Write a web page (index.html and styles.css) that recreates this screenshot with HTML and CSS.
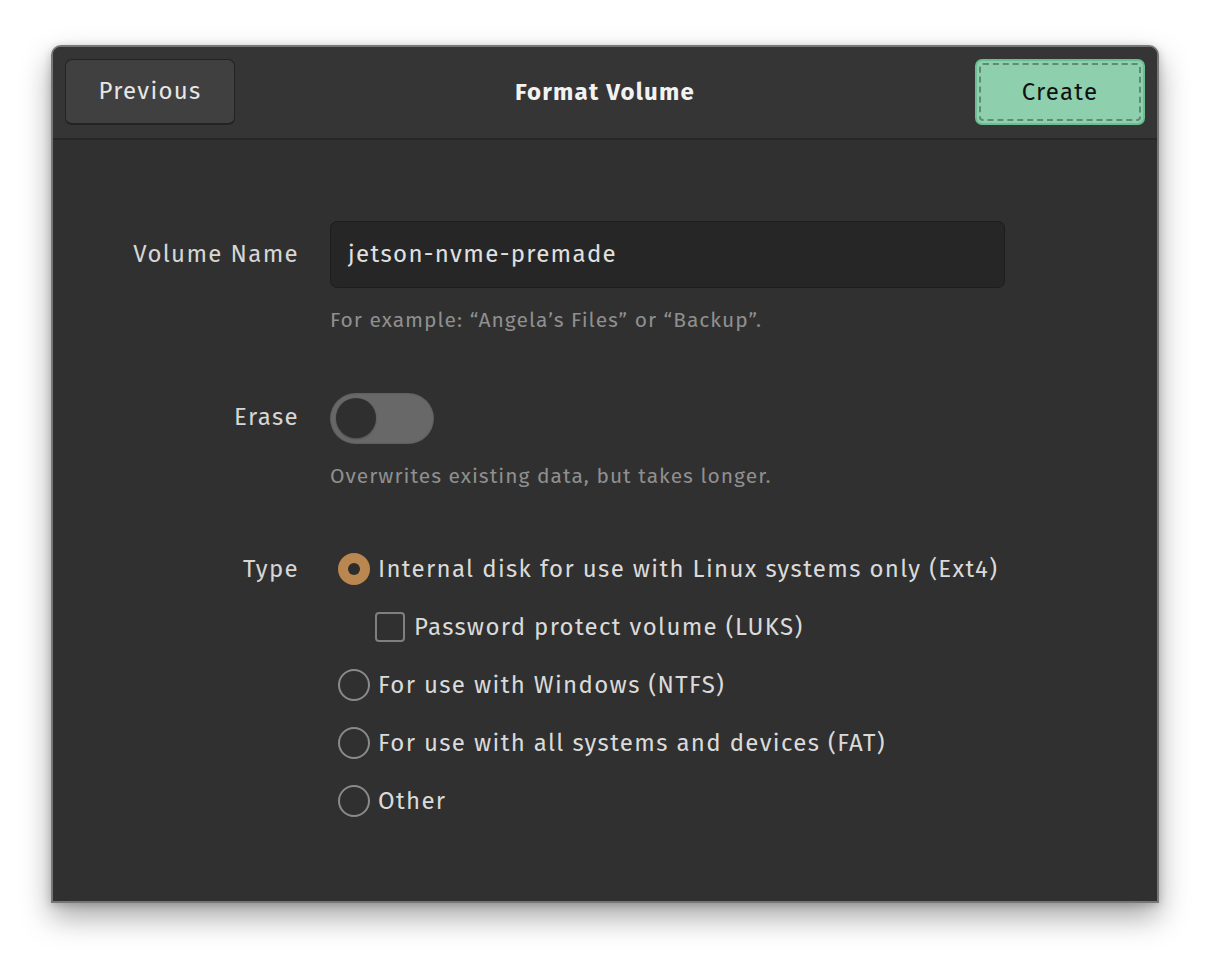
FILE: index.html
```html
<!DOCTYPE html>
<html>
<head>
<meta charset="utf-8">
<link rel="stylesheet" href="styles.css">
</head>
<body>
<div class="window">
  <header class="header">
    <button class="btn btn-prev">Previous</button>
    <div class="title">Format Volume</div>
    <button class="btn btn-create"><span class="focus">Create</span></button>
  </header>
  <main class="content">
    <div class="form">
      <div class="label row-input">Volume Name</div>
      <div class="ctl row-input"><div class="input">jetson-nvme-premade</div></div>
      <div></div>
      <div class="hint">For example: “Angela’s Files” or “Backup”.</div>

      <div class="label row-switch">Erase</div>
      <div class="ctl row-switch"><div class="switch"><div class="knob"></div></div></div>
      <div></div>
      <div class="hint">Overwrites existing data, but takes longer.</div>

      <div class="label row-opt first">Type</div>
      <div class="ctl row-opt first"><span class="radio on"></span><span class="opt">Internal disk for use with Linux systems only (Ext4)</span></div>
      <div></div>
      <div class="ctl row-opt sub"><span class="check"></span><span class="opt">Password protect volume (LUKS)</span></div>
      <div></div>
      <div class="ctl row-opt"><span class="radio"></span><span class="opt">For use with Windows (NTFS)</span></div>
      <div></div>
      <div class="ctl row-opt"><span class="radio"></span><span class="opt">For use with all systems and devices (FAT)</span></div>
      <div></div>
      <div class="ctl row-opt"><span class="radio"></span><span class="opt">Other</span></div>
    </div>
  </main>
</div>
</body>
</html>
```

FILE: styles.css
```css
* { box-sizing: border-box; }
html, body { margin: 0; padding: 0; background: #ffffff; }
body {
  font-family: "Fira Sans", "Noto Sans", "Open Sans", sans-serif;
  width: 1210px;
  height: 960px;
  overflow: hidden;
}
.window {
  margin: 45px 0 0 51px;
  width: 1108px;
  height: 858px;
  background: #303030;
  border: 2px solid #767676;
  border-radius: 10px 10px 0 0;
  box-shadow: 0 14px 30px rgba(0,0,0,0.35), 0 2px 8px rgba(0,0,0,0.2);
  display: flex;
  flex-direction: column;
  overflow: hidden;
}
.header {
  height: 93px;
  background: #353535;
  border-bottom: 2px solid #272727;
  display: flex;
  align-items: center;
  justify-content: space-between;
  padding: 0 12px 2px;
  flex: none;
}
.btn {
  width: 170px;
  height: 66px;
  border-radius: 7px;
  font-family: inherit;
  font-size: 24px;
  letter-spacing: 1.3px;
  cursor: pointer;
  padding: 0;
}
.btn-prev {
  background: #404040;
  color: #e6e6e6;
  border: 1px solid #232323;
  border-bottom-width: 2px;
}
.btn-create {
  background: #8ecfae;
  color: #111;
  border: 2px solid #6cbd92;
  padding: 2px;
}
.btn-create .focus {
  display: flex;
  align-items: center;
  justify-content: center;
  width: 100%;
  height: 100%;
  border: 2px dashed #5f8a74;
  border-radius: 4px;
}
.title {
  font-size: 24px;
  font-weight: 700;
  letter-spacing: 1.2px;
  color: #f2f2f2;
}
.content {
  flex: 1;
  padding-top: 81px;
}
.form {
  display: grid;
  grid-template-columns: 245px 675px;
  column-gap: 32px;
  font-size: 24px;
  letter-spacing: 1.35px;
  color: #dadada;
}
.label {
  text-align: right;
  display: flex;
  align-items: center;
  justify-content: flex-end;
  color: #d6d6d6;
  margin-right: -1px;
}
.ctl { display: flex; align-items: center; }
.row-input { height: 67px; }
.row-input.label { padding-bottom: 2px; }
.input {
  width: 675px;
  height: 67px;
  background: #262626;
  border: 1px solid #1d1d1d;
  border-radius: 7px;
  display: flex;
  align-items: center;
  padding-left: 17px;
  padding-bottom: 2px;
  color: #e0e0e0;
}
.hint {
  font-size: 21px;
  letter-spacing: 1px;
  color: #8f8f8f;
  line-height: 24px;
  margin-top: 20px;
}
.row-switch { height: 51px; margin-top: 61px; }
.row-switch.label { padding-bottom: 3px; }
.switch {
  width: 104px;
  height: 51px;
  border-radius: 26px;
  background: #686868;
  position: relative;
  box-shadow: inset 0 0 2px rgba(0,0,0,0.3);
}
.knob {
  position: absolute;
  left: 6px;
  top: 5px;
  width: 40px;
  height: 40px;
  border-radius: 50%;
  background: #2f2f2f;
  box-shadow: 0 1px 2px rgba(0,0,0,0.3);
}
.row-opt { height: 58px; }
.row-opt.first { margin-top: 52px; }
.ctl.row-opt { padding-left: 8px; }
.ctl.row-opt.sub { padding-left: 45px; }
.radio {
  width: 32px;
  height: 32px;
  border-radius: 50%;
  border: 2px solid #8a8a8a;
  flex: none;
  margin-right: 8px;
  display: flex;
  align-items: center;
  justify-content: center;
}
.radio.on {
  background: #b9874f;
  border-color: #b9874f;
}
.radio.on::after {
  content: "";
  width: 12px;
  height: 12px;
  border-radius: 50%;
  background: #2d2d2d;
}
.check {
  width: 30px;
  height: 30px;
  border: 2px solid #7f7f7f;
  border-radius: 4px;
  flex: none;
  margin-right: 9px;
}
.opt { color: #dadada; }
```
